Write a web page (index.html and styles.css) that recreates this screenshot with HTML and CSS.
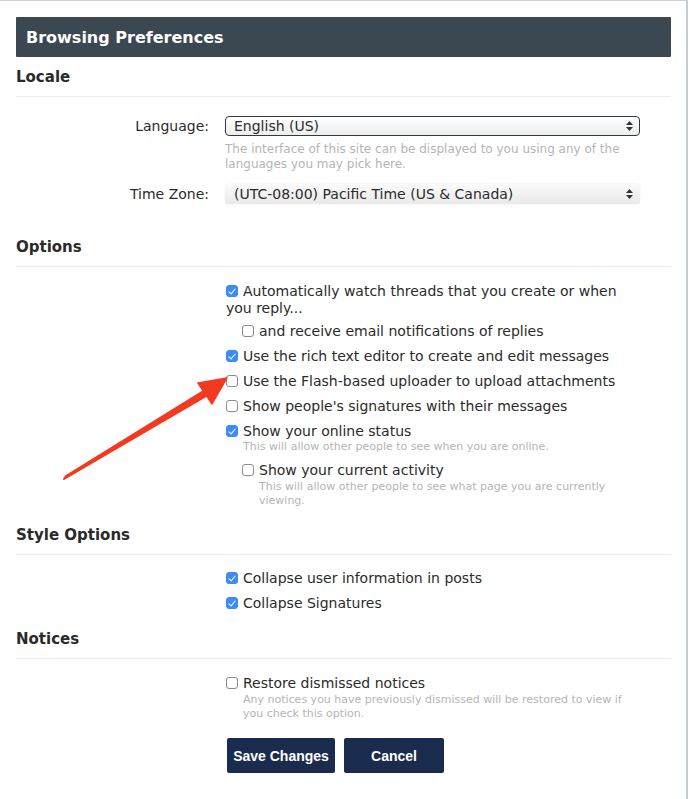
FILE: index.html
```html
<!DOCTYPE html>
<html>
<head>
<meta charset="utf-8">
<link rel="stylesheet" href="styles.css">
</head>
<body>
<div class="frame">
  <h2 class="title">Browsing Preferences</h2>

  <h3 class="section-head">Locale</h3>
  <div class="locale">
    <div class="field">
      <label class="field-label">Language:</label>
      <div class="field-ctrl">
        <div class="select select-focus"><span>English (US)</span><svg class="updown" width="7" height="10" viewBox="0 0 7 10"><path d="M3.5 0 L7 4 L0 4 Z M0 6 L7 6 L3.5 10 Z" fill="#333"/></svg></div>
        <p class="hint hint-lg">The interface of this site can be displayed to you using any of the languages you may pick here.</p>
      </div>
    </div>
    <div class="field field-tz">
      <label class="field-label">Time Zone:</label>
      <div class="field-ctrl">
        <div class="select"><span>(UTC-08:00) Pacific Time (US &amp; Canada)</span><svg class="updown" width="7" height="10" viewBox="0 0 7 10"><path d="M3.5 0 L7 4 L0 4 Z M0 6 L7 6 L3.5 10 Z" fill="#333"/></svg></div>
      </div>
    </div>
  </div>

  <h3 class="section-head head-options">Options</h3>
  <ul class="checks checks-options">
    <li><label class="chk"><span class="box on"></span>Automatically watch threads that you create or when you reply...</label>
      <ul class="checks sub sub-first">
        <li><label class="chk"><span class="box"></span>and receive email notifications of replies</label></li>
      </ul>
    </li>
    <li><label class="chk"><span class="box on"></span>Use the rich text editor to create and edit messages</label></li>
    <li><label class="chk"><span class="box"></span>Use the Flash-based uploader to upload attachments</label></li>
    <li><label class="chk"><span class="box"></span>Show people's signatures with their messages</label></li>
    <li><label class="chk"><span class="box on"></span>Show your online status</label>
      <p class="hint">This will allow other people to see when you are online.</p>
      <ul class="checks sub">
        <li><label class="chk"><span class="box"></span>Show your current activity</label>
          <p class="hint hint-gap">This will allow other people to see what page you are currently viewing.</p>
        </li>
      </ul>
    </li>
  </ul>

  <h3 class="section-head head-style">Style Options</h3>
  <ul class="checks checks-style">
    <li><label class="chk"><span class="box on"></span>Collapse user information in posts</label></li>
    <li><label class="chk"><span class="box on"></span>Collapse Signatures</label></li>
  </ul>

  <h3 class="section-head head-notices">Notices</h3>
  <ul class="checks checks-notices">
    <li><label class="chk"><span class="box"></span>Restore dismissed notices</label>
      <p class="hint hint-gap">Any notices you have previously dismissed will be restored to view if you check this option.</p>
    </li>
  </ul>

  <div class="buttons">
    <button class="btn btn-save">Save Changes</button>
    <button class="btn btn-cancel">Cancel</button>
  </div>

  <svg class="arrow" width="689" height="799" viewBox="0 0 689 799">
    <path d="M64 479 L66 476 L205 390 L208 395 Z" fill="#f23a22" stroke="#f23a22" stroke-width="2" stroke-linejoin="round"/>
    <polygon points="227,378 198,383 212,404" fill="#f23a22" stroke="#f23a22" stroke-width="1.5" stroke-linejoin="round"/>
  </svg>
</div>
</body>
</html>
```

FILE: styles.css
```css
html, body {
  margin: 0;
  padding: 0;
  background: #fff;
}

body {
  font-family: "DejaVu Sans", Verdana, sans-serif;
  color: #2b2b2b;
  width: 689px;
  height: 799px;
  overflow: hidden;
}

.frame {
  position: relative;
  box-sizing: border-box;
  width: 688px;
  height: 799px;
  border-top: 1px solid #c9d2dd;
  border-right: 2px solid #c3cdd9;
  padding: 16px 15px 0 16px;
}

.title {
  margin: 0;
  height: 40px;
  overflow: hidden;
  background: #3b4852;
  color: #fff;
  font-size: 16px;
  font-weight: bold;
  line-height: 42px;
  padding-left: 10px;
  border-radius: 1px;
}

.section-head {
  margin: 0;
  font-size: 15px;
  font-weight: bold;
  line-height: 19px;
  padding: 11px 0 9px;
  border-bottom: 1px solid #e7eef6;
  color: #2a2a2a;
}

.head-options { margin-top: 23px; }
.head-style { margin-top: 7px; }
.head-notices { margin-top: 7px; }

.locale {
  padding-top: 19px;
}

.field {
  display: flex;
  align-items: flex-start;
}

.field-tz {
  margin-top: 12px;
}

.field-label {
  width: 193px;
  flex: none;
  text-align: right;
  font-size: 14px;
  line-height: 20px;
  color: #2b2b2b;
}

.field-ctrl {
  margin-left: 16px;
  width: 415px;
}

.select {
  box-sizing: border-box;
  height: 20px;
  width: 415px;
  display: flex;
  align-items: center;
  justify-content: space-between;
  padding: 0 7px 0 9px;
  font-size: 14px;
  color: #2b2b2b;
  border-radius: 4px;
  background: linear-gradient(#fbfbfb, #e9e9e9);
  box-shadow: 0 0 1px rgba(0,0,0,0.25);
}

.select-focus {
  border: 1px solid #2e3a47;
  background: linear-gradient(#ffffff, #ededed);
  box-shadow: none;
  padding-left: 8px;
  padding-right: 6px;
}

.hint {
  margin: 0;
  font-size: 11px;
  line-height: 14px;
  color: #b5b5b5;
  max-width: 390px;
}

.hint-lg {
  margin-top: 6px;
  font-size: 12px;
  line-height: 15px;
  max-width: 410px;
}

.checks li > .hint.hint-gap {
  margin-top: 1px;
}

.checks {
  list-style: none;
  margin: 0;
  padding: 0 0 0 210px;
  display: flex;
  flex-direction: column;
  gap: 8px;
}

.checks-options { margin-top: 16px; }
.checks-style { margin-top: 15px; }
.checks-notices { margin-top: 16px; }

.checks.sub {
  padding-left: 16px;
  margin-top: 8px;
}

.checks.sub-first {
  margin-top: 6px;
}

.checks li > .hint {
  padding-left: 17px;
}

.chk {
  display: block;
  font-size: 14px;
  line-height: 17px;
  color: #2b2b2b;
  max-width: 400px;
}

.box {
  display: inline-block;
  box-sizing: border-box;
  width: 12px;
  height: 12px;
  border: 1px solid #8d8d8d;
  border-radius: 3px;
  background: #fff;
  margin-right: 5px;
  vertical-align: -1px;
  position: relative;
}

.box.on {
  background: #3c8cf3;
  border-color: #3c8cf3;
}

.box.on::after {
  content: "";
  position: absolute;
  left: 3px;
  top: 1px;
  width: 3px;
  height: 6px;
  border-right: 1.5px solid #fff;
  border-bottom: 1.5px solid #fff;
  transform: rotate(40deg);
}

.buttons {
  display: flex;
  gap: 9px;
  padding-left: 211px;
  margin-top: 17px;
}

.btn {
  height: 35px;
  border: none;
  border-radius: 2px;
  background: #1a2c4e;
  color: #fff;
  font-family: "Liberation Sans", Arial, sans-serif;
  font-weight: bold;
  font-size: 14px;
  padding: 0;
}

.btn-save { width: 108px; }
.btn-cancel { width: 100px; }

.arrow {
  position: absolute;
  left: 0;
  top: -1px;
  pointer-events: none;
}
```
